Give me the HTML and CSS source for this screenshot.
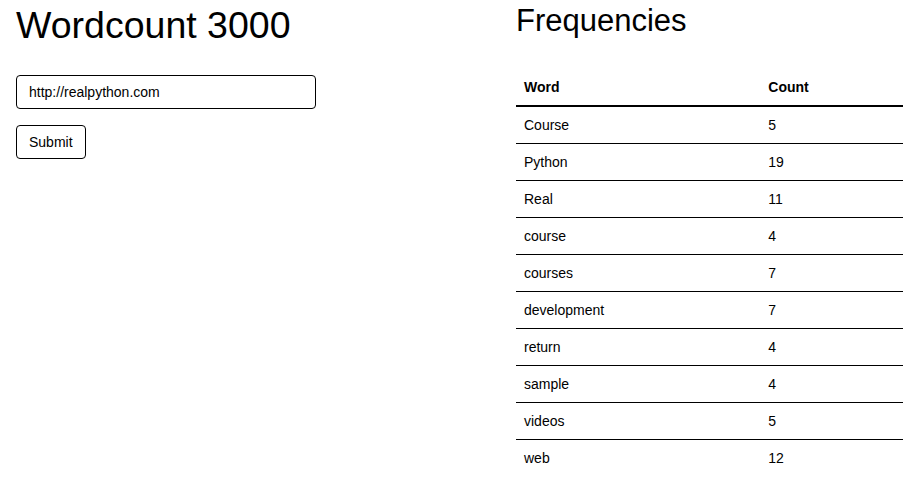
FILE: index.html
```html
<!DOCTYPE html>
<html>
<head>
<meta charset="utf-8">
<title>Wordcount 3000</title>
<link rel="stylesheet" href="styles.css">
</head>
<body>
<div class="page">
  <section class="col-left">
    <h1 class="title">Wordcount 3000</h1>
    <form class="url-form">
      <input class="url-input" type="text" value="http://realpython.com">
      <button class="submit-btn" type="button">Submit</button>
    </form>
  </section>
  <section class="col-right">
    <h2 class="subtitle">Frequencies</h2>
    <table class="freq-table">
      <thead>
        <tr><th class="word-col">Word</th><th>Count</th></tr>
      </thead>
      <tbody>
        <tr><td>Course</td><td>5</td></tr>
        <tr><td>Python</td><td>19</td></tr>
        <tr><td>Real</td><td>11</td></tr>
        <tr><td>course</td><td>4</td></tr>
        <tr><td>courses</td><td>7</td></tr>
        <tr><td>development</td><td>7</td></tr>
        <tr><td>return</td><td>4</td></tr>
        <tr><td>sample</td><td>4</td></tr>
        <tr><td>videos</td><td>5</td></tr>
        <tr><td>web</td><td>12</td></tr>
      </tbody>
    </table>
  </section>
</div>
</body>
</html>
```

FILE: styles.css
```css
html, body {
  margin: 0;
  padding: 0;
  background: #fff;
  color: #000;
  font-family: "Liberation Sans", Arial, Helvetica, sans-serif;
}

.page {
  display: grid;
  grid-template-columns: 1fr 1fr;
  column-gap: 113px;
  padding: 0 16px;
}

.title {
  font-size: 37.5px;
  font-weight: 400;
  line-height: 42px;
  margin: 4px 0 0 0;
}

.url-form {
  display: flex;
  flex-direction: column;
  align-items: flex-start;
  gap: 16px;
  margin-top: 29px;
}

.url-input {
  box-sizing: border-box;
  width: 300px;
  height: 34px;
  padding: 0 12px;
  border: 1px solid #000;
  border-radius: 4px;
  font-family: inherit;
  font-size: 14px;
  color: #000;
  background: #fff;
}

.submit-btn {
  box-sizing: border-box;
  height: 34px;
  padding: 0 12px;
  border: 1px solid #000;
  border-radius: 4px;
  background: #fff;
  font-family: inherit;
  font-size: 14px;
  color: #000;
}

.subtitle {
  font-size: 31px;
  font-weight: 400;
  line-height: 36px;
  margin: 3px 0 0 0;
}

.freq-table {
  width: 100%;
  table-layout: fixed;
  border-collapse: collapse;
  margin-top: 30px;
  font-size: 14px;
}

.freq-table th,
.freq-table td {
  text-align: left;
  padding: 10px 8px;
  line-height: 16px;
}

.freq-table .word-col {
  width: 59%;
}

.freq-table th {
  font-weight: 700;
  border-bottom: 2px solid #000;
}

.freq-table tbody tr + tr td {
  border-top: 1px solid #000;
}
```
